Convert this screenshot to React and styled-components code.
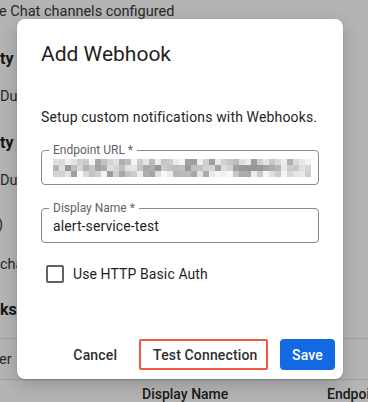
import React from "react";
import styled, { createGlobalStyle } from "styled-components";

const Global = createGlobalStyle`
  html, body { margin: 0; padding: 0; background: #fff; }
  body { font-family: Roboto, "Liberation Sans", Arial, sans-serif; -webkit-font-smoothing: antialiased; }
  * { box-sizing: border-box; }
`;

const Page = styled.div`
  position: relative;
  width: 368px;
  height: 402px;
  overflow: hidden;
  background: #fff;
`;

const Backdrop = styled.div`
  display: flex;
  flex-direction: column;
  padding-top: 2px;
  color: #3a3a3a;
  font-size: 14px;
`;

const BgLine = styled.div`
  height: 20px;
  line-height: 20px;
  white-space: nowrap;
  margin-top: ${(p) => p.$mt || 0}px;
  margin-left: ${(p) => p.$ml || 0}px;
  font-weight: ${(p) => (p.$bold ? 700 : 400)};
  font-size: ${(p) => (p.$bold ? 16 : 14.5)}px;
  color: ${(p) => (p.$bold ? "#222" : "#3a3a3a")};
`;

const BgDivider = styled.div`
  height: 1px;
  background: #e3e3e3;
  margin-top: ${(p) => p.$mt || 0}px;
`;

const BgHeadRow = styled.div`
  display: grid;
  grid-template-columns: 142px 185px 1fr;
  height: 20px;
  line-height: 20px;
  margin-top: ${(p) => p.$mt || 0}px;
  font-size: 14px;
  font-weight: 500;
  color: #2a2a2a;
  white-space: nowrap;
`;

const Scrim = styled.div`
  position: absolute;
  inset: 0;
  background: rgba(0, 0, 0, 0.295);
`;

const Dialog = styled.div`
  position: absolute;
  left: 17px;
  top: 19px;
  width: 326px;
  height: 360px;
  background: #fff;
  border-radius: 8px;
  box-shadow: 0 6px 18px rgba(0, 0, 0, 0.18), 0 1px 3px rgba(0, 0, 0, 0.12);
  display: flex;
  flex-direction: column;
  padding: 21px 0 9px 24px;
`;

const Title = styled.h2`
  margin: 0;
  font-size: 21px;
  line-height: 28px;
  font-weight: 400;
  color: #1f1f1f;
`;

const Intro = styled.p`
  margin: 39px 0 0;
  font-size: 14px;
  line-height: 20px;
  color: #1f1f1f;
  letter-spacing: 0.15px;
`;

const Field = styled.div`
  position: relative;
  width: 278px;
  height: 35px;
  margin-top: ${(p) => p.$mt}px;
  border: 1px solid #85888c;
  border-radius: 4px;
  display: flex;
  align-items: center;
  padding-left: 11px;
`;

const FieldLabel = styled.span`
  position: absolute;
  left: 7px;
  top: -8px;
  padding: 0 4px;
  background: #fff;
  font-size: 12px;
  line-height: 14px;
  color: #5f6368;
  white-space: nowrap;
`;

const FieldValue = styled.span`
  font-size: 14px;
  line-height: 20px;
  color: #1f1f1f;
  letter-spacing: 0.1px;
`;

const CheckRow = styled.label`
  display: flex;
  align-items: center;
  gap: 9px;
  margin: 22px 0 0 5px;
  font-size: 14px;
  line-height: 18px;
  color: #1f1f1f;
  letter-spacing: 0.1px;
`;

const Box = styled.span`
  width: 18px;
  height: 18px;
  border: 2px solid #5f6368;
  border-radius: 2px;
`;

const Actions = styled.div`
  margin-top: auto;
  display: flex;
  justify-content: flex-end;
  align-items: center;
  padding-right: 8px;
`;

const Btn = styled.button`
  appearance: none;
  height: 31px;
  font-family: inherit;
  font-size: 14px;
  font-weight: 500;
  letter-spacing: 0.15px;
  cursor: pointer;
  text-align: left;
  white-space: nowrap;
  outline: none;
  width: ${(p) => (p.$w ? `${p.$w}px` : "auto")};
  margin-left: ${(p) => p.$ml || 0}px;
  padding: ${(p) => p.$pad};
  border-width: 2px;
  border-style: solid;
  border-color: ${(p) => (p.$variant === "highlight" ? "#ee5a44" : "transparent")};
  background: ${(p) => (p.$variant === "primary" ? "#1369e2" : "#fff")};
  color: ${(p) => (p.$variant === "primary" ? "#fff" : "#2d2f31")};
  border-radius: ${(p) => (p.$variant === "highlight" ? "2px" : "4px")};
`;

const cells = (() => {
  const out = [];
  let s = 7;
  const rnd = () => {
    s = (s * 9301 + 49297) % 233280;
    return s / 233280;
  };
  for (let r = 0; r < 3; r++) {
    for (let c = 0; c < 43; c++) {
      const v = rnd();
      const edge = c < 2 || c > 40 ? 0.6 : 1;
      const g = Math.round(250 - v * 95 * edge - (r === 1 ? 15 : 0));
      out.push({ x: c * 6, y: r * 6, g: Math.max(150, Math.min(252, g)) });
    }
  }
  return out;
})();

const Mosaic = () => (
  <svg width="258" height="18" viewBox="0 0 258 18" style={{ display: "block" }}>
    {cells.map((c, i) => (
      <rect key={i} x={c.x} y={c.y} width="6" height="6" fill={`rgb(${c.g},${c.g},${c.g})`} />
    ))}
  </svg>
);

export default function App() {
  return (
    <Page>
      <Global />
      <Backdrop>
        <BgLine $ml={-1}>e Chat channels configured</BgLine>
        <BgLine $mt={27} $bold>ty</BgLine>
        <BgLine $mt={18}>Duty</BgLine>
        <BgLine $mt={26} $bold>ty</BgLine>
        <BgLine $mt={18}>Duty</BgLine>
        <BgLine $mt={24} $ml={-2}>)</BgLine>
        <BgLine $mt={20}>channels</BgLine>
        <BgLine $mt={25} $bold>ks</BgLine>
        <BgDivider $mt={18} />
        <BgLine $mt={11} $ml={-1}>er</BgLine>
        <BgDivider $mt={9} />
        <BgHeadRow $mt={4}>
          <span />
          <span>Display Name</span>
          <span>Endpoint URL</span>
        </BgHeadRow>
      </Backdrop>
      <Scrim />
      <Dialog role="dialog">
        <Title>Add Webhook</Title>
        <Intro>Setup custom notifications with Webhooks.</Intro>
        <Field $mt={23}>
          <FieldLabel>Endpoint URL *</FieldLabel>
          <Mosaic />
        </Field>
        <Field $mt={23}>
          <FieldLabel>Display Name *</FieldLabel>
          <FieldValue>alert-service-test</FieldValue>
        </Field>
        <CheckRow>
          <Box />
          Use HTTP Basic Auth
        </CheckRow>
        <Actions>
          <Btn $pad="0 14px 0 12px">Cancel</Btn>
          <Btn $variant="highlight" $ml={6} $w={129} $pad="0 0 0 12px">Test Connection</Btn>
          <Btn $variant="primary" $ml={12} $pad="0 10px">Save</Btn>
        </Actions>
      </Dialog>
    </Page>
  );
}
